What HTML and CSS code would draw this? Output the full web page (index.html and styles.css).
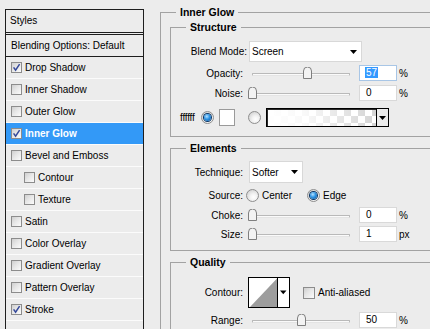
FILE: index.html
```html
<!DOCTYPE html>
<html>
<head>
<meta charset="utf-8">
<link rel="stylesheet" href="styles.css">
</head>
<body>
<div class="page">
  <div class="styles-panel">
    <div class="sp-head">Styles</div>
    <div class="sp-blend">Blending Options: Default</div>
    <ul class="sp-list">
      <li class="sp-item"><span class="cb"><svg viewBox="0 0 9 9" width="9" height="9"><path d="M1.6 4.4L3.6 7.2L7.6 1.2" fill="none" stroke="#34489a" stroke-width="1.5"/></svg></span>Drop Shadow</li>
      <li class="sp-item"><span class="cb"></span>Inner Shadow</li>
      <li class="sp-item"><span class="cb"></span>Outer Glow</li>
      <li class="sp-item active"><span class="cb"><svg viewBox="0 0 9 9" width="9" height="9"><path d="M1.6 4.4L3.6 7.2L7.6 1.2" fill="none" stroke="#34489a" stroke-width="1.5"/></svg></span>Inner Glow</li>
      <li class="sp-item"><span class="cb"></span>Bevel and Emboss</li>
      <li class="sp-item sub"><span class="cb"></span>Contour</li>
      <li class="sp-item sub"><span class="cb"></span>Texture</li>
      <li class="sp-item"><span class="cb"></span>Satin</li>
      <li class="sp-item"><span class="cb"></span>Color Overlay</li>
      <li class="sp-item"><span class="cb"></span>Gradient Overlay</li>
      <li class="sp-item"><span class="cb"></span>Pattern Overlay</li>
      <li class="sp-item"><span class="cb"><svg viewBox="0 0 9 9" width="9" height="9"><path d="M1.6 4.4L3.6 7.2L7.6 1.2" fill="none" stroke="#34489a" stroke-width="1.5"/></svg></span>Stroke</li>
    </ul>
  </div>

  <div class="settings">
    <fieldset class="grp outer">
      <legend>Inner Glow</legend>

      <fieldset class="grp sub-grp first structure">
        <legend>Structure</legend>
        <div class="row r-blend">
          <span class="lbl lbl-wide">Blend Mode:</span>
          <div class="sel sel-blend"><span>Screen</span><svg width="7" height="4" viewBox="0 0 7 4"><path d="M0 0h7L3.5 4z"/></svg></div>
        </div>
        <div class="row r-field r-opacity">
          <span class="lbl">Opacity:</span>
          <div class="slider"><span class="track"></span><svg class="thumb" style="left:55px" width="9" height="12" viewBox="0 0 9 12"><path d="M.5 11.5V4a4 4 0 0 1 8 0v7.5z"/></svg></div>
          <div class="num focus"><span class="hl">57</span></div>
          <span class="unit">%</span>
        </div>
        <div class="row r-field r-noise">
          <span class="lbl">Noise:</span>
          <div class="slider"><span class="track"></span><svg class="thumb" style="left:0px" width="9" height="12" viewBox="0 0 9 12"><path d="M.5 11.5V4a4 4 0 0 1 8 0v7.5z"/></svg></div>
          <div class="num">0</div>
          <span class="unit">%</span>
        </div>
        <div class="row r-color">
          <span class="hex">ffffff</span>
          <span class="rb on"></span>
          <span class="swatch"></span>
          <span class="rb rb-grad"></span>
          <div class="grad"><span class="grad-fill"></span><span class="grad-btn"><svg width="7" height="4" viewBox="0 0 7 4"><path d="M0 0h7L3.5 4z"/></svg></span></div>
        </div>
      </fieldset>

      <fieldset class="grp sub-grp elements">
        <legend>Elements</legend>
        <div class="row r-tech">
          <span class="lbl">Technique:</span>
          <div class="sel sel-tech"><span>Softer</span><svg width="7" height="4" viewBox="0 0 7 4"><path d="M0 0h7L3.5 4z"/></svg></div>
        </div>
        <div class="row r-source">
          <span class="lbl">Source:</span>
          <label class="opt opt-center"><span class="rb"></span>Center</label>
          <label class="opt"><span class="rb on"></span>Edge</label>
        </div>
        <div class="row r-field r-choke">
          <span class="lbl">Choke:</span>
          <div class="slider"><span class="track"></span><svg class="thumb" style="left:0px" width="9" height="12" viewBox="0 0 9 12"><path d="M.5 11.5V4a4 4 0 0 1 8 0v7.5z"/></svg></div>
          <div class="num">0</div>
          <span class="unit">%</span>
        </div>
        <div class="row r-field r-size">
          <span class="lbl">Size:</span>
          <div class="slider"><span class="track"></span><svg class="thumb" style="left:0px" width="9" height="12" viewBox="0 0 9 12"><path d="M.5 11.5V4a4 4 0 0 1 8 0v7.5z"/></svg></div>
          <div class="num">1</div>
          <span class="unit">px</span>
        </div>
      </fieldset>

      <fieldset class="grp sub-grp quality">
        <legend>Quality</legend>
        <div class="row r-contour">
          <span class="lbl">Contour:</span>
          <svg class="contour" width="42" height="31" viewBox="0 0 42 31">
            <rect x=".5" y=".5" width="29" height="30" fill="#fff" stroke="#000"/>
            <polygon points="2,30 29,1.5 29,30" fill="#9d9d9d"/>
            <rect x="29.5" y=".5" width="12" height="30" fill="#fff" stroke="#000"/>
            <path d="M32 13.5h6.5l-3.25 3.8z" fill="#000"/>
          </svg>
          <label class="opt-aa"><span class="cb cb-lg"></span>Anti-aliased</label>
        </div>
        <div class="row r-field r-range">
          <span class="lbl">Range:</span>
          <div class="slider"><span class="track"></span><svg class="thumb" style="left:49px" width="9" height="12" viewBox="0 0 9 12"><path d="M.5 11.5V4a4 4 0 0 1 8 0v7.5z"/></svg></div>
          <div class="num">50</div>
          <span class="unit">%</span>
        </div>
      </fieldset>
    </fieldset>
  </div>
</div>
</body>
</html>
```

FILE: styles.css
```css
html, body {
  margin: 0;
  height: 100%;
  overflow: hidden;
  background: #ececec;
}

body {
  font-family: "Liberation Sans", Arial, sans-serif;
  font-size: 10px;
  color: #000;
}

.page {
  display: flex;
  align-items: flex-start;
  width: 430px;
  height: 329px;
  overflow: hidden;
}

/* ---------- Styles list ---------- */
.styles-panel {
  flex: none;
  margin: 9px 0 0 5px;
  width: 139px;
  height: 320px;
  box-sizing: border-box;
  border: 1px solid #1e1e1e;
  border-bottom: none;
  background: #ececec;
  overflow: hidden;
}

.sp-head {
  height: 22px;
  line-height: 22px;
  padding-left: 4px;
  border-bottom: 3px double #1e1e1e;
}

.sp-blend {
  height: 21px;
  line-height: 21px;
  padding-left: 5px;
  border-bottom: 1px solid #1e1e1e;
}

.sp-list {
  list-style: none;
  margin: 0;
  padding: 0;
}

.sp-item {
  display: flex;
  align-items: center;
  gap: 3px;
  height: 21px;
  padding-left: 5px;
  border-bottom: 1px solid #fbfbfb;
}

.sp-item.sub {
  padding-left: 18px;
}

.sp-item.active {
  background: #3399f7;
  color: #fff;
  font-weight: bold;
}

.cb {
  flex: none;
  display: flex;
  align-items: center;
  justify-content: center;
  width: 11px;
  height: 11px;
  box-sizing: border-box;
  border: 1px solid #8c8c8c;
  background: linear-gradient(135deg, #cfcfcf 0%, #e6e6e6 45%, #fbfbfb 100%);
}

.cb-lg {
  width: 12px;
  height: 12px;
}

/* ---------- Settings ---------- */
.settings {
  flex: none;
  width: 270px;
  margin: 6px 0 0 16px;
}

.grp {
  margin: 0;
  padding: 0;
  min-width: 0;
  border: 1px solid #a2a2a2;
  border-right: none;
}

.grp legend {
  margin-left: 15px;
  padding: 0 4px;
  font-size: 10.5px;
  font-weight: bold;
  line-height: 13px;
}

.outer {
  height: 323px;
  box-sizing: border-box;
  border-bottom: none;
}

.sub-grp {
  margin: 5px 0 0 9px;
}

.sub-grp.first {
  margin-top: 2px;
}

.structure {
  padding: 7px 0 9px;
}

.elements {
  padding: 6px 0 8px;
}

.quality {
  padding: 8px 0 1px;
  border-bottom: none;
}

.row {
  display: flex;
  align-items: center;
}

.lbl {
  flex: none;
  width: 72px;
  text-align: right;
}

.lbl-wide {
  width: 76px;
}

.sel {
  flex: none;
  display: flex;
  align-items: center;
  justify-content: space-between;
  box-sizing: border-box;
  background: #fff;
  border: 1px solid #d8d8d8;
  padding: 0 4px 0 2px;
}

.sel-blend {
  margin-left: 2px;
  width: 113px;
  height: 21px;
}

.sel-tech {
  margin-left: 6px;
  width: 54px;
  height: 22px;
}

.r-field {
  height: 16px;
}

.r-opacity { margin-top: 3px; }
.r-noise { margin-top: 4px; }
.r-color { margin-top: 7px; height: 19px; }
.r-source { margin-top: 6px; height: 13px; }
.r-choke { margin-top: 5px; }
.r-size { margin-top: 3px; }
.r-range { margin-top: 4px; }

.slider {
  flex: none;
  position: relative;
  margin-left: 5px;
  width: 111px;
  height: 16px;
}

.track {
  display: block;
  margin: 8px 0 0 4px;
  width: 98px;
  height: 3px;
  box-sizing: border-box;
  border: 1px solid #b9b9b9;
  border-bottom-color: #e4e4e4;
  border-radius: 1px;
  background: #fafafa;
}

.thumb {
  position: absolute;
  top: 2px;
  fill: #f3f3f3;
  stroke: #7f7f7f;
}

.num {
  flex: none;
  box-sizing: border-box;
  width: 38px;
  height: 16px;
  line-height: 14px;
  padding-left: 6px;
  background: #fff;
  border: 1px solid #d9d9d9;
}

.num.focus {
  border-color: #a8c6e6;
  padding-left: 5px;
}

.hl {
  display: inline-block;
  background: #3399ff;
  color: #fff;
  line-height: 11px;
  padding: 0 1px;
}

.unit {
  margin-left: 2px;
}

.hex {
  flex: none;
  width: 21px;
  margin-left: 9px;
  letter-spacing: -0.2px;
}

.rb {
  flex: none;
  display: flex;
  align-items: center;
  justify-content: center;
  width: 13px;
  height: 13px;
  box-sizing: border-box;
  border-radius: 50%;
  border: 1px solid #8e8e8e;
  background: radial-gradient(circle at 60% 65%, #ffffff 0%, #f2f2f2 35%, #c6c6c6 100%);
}

.rb.on::after {
  content: "";
  width: 7px;
  height: 7px;
  border-radius: 50%;
  background: radial-gradient(circle at 40% 35%, #b6e2ff 0%, #2c93e4 45%, #0d5196 100%);
  box-shadow: 0 0 0 1px #0b3564;
}

.swatch {
  flex: none;
  margin-left: 5px;
  width: 16px;
  height: 17px;
  box-sizing: border-box;
  border: 1px solid #9a9a9a;
  background: #fff;
}

.rb-grad {
  margin-left: 13px;
}

.grad {
  flex: none;
  display: flex;
  margin-left: 5px;
  width: 123px;
  height: 19px;
  box-sizing: border-box;
  border: 1px solid #000;
}

.grad-fill {
  flex: 1;
  box-shadow: inset 1px 1px 0 #2a2a2a;
  background:
    linear-gradient(to right, #fff 0%, rgba(255, 255, 255, 0.85) 35%, rgba(255, 255, 255, 0) 100%),
    repeating-conic-gradient(#d4d4d4 0 25%, #fff 0 50%) 0 0 / 14px 14px;
}

.grad-btn {
  flex: none;
  display: flex;
  align-items: center;
  justify-content: center;
  width: 11px;
  border-left: 1px solid #000;
  background: #ececec;
}

.opt {
  flex: none;
  display: flex;
  align-items: center;
  gap: 3px;
}

.opt-center {
  margin-left: 3px;
  width: 61px;
}

.contour {
  flex: none;
  margin-left: 5px;
}

.opt-aa {
  display: flex;
  align-items: center;
  gap: 3px;
  margin-left: 13px;
}
```
